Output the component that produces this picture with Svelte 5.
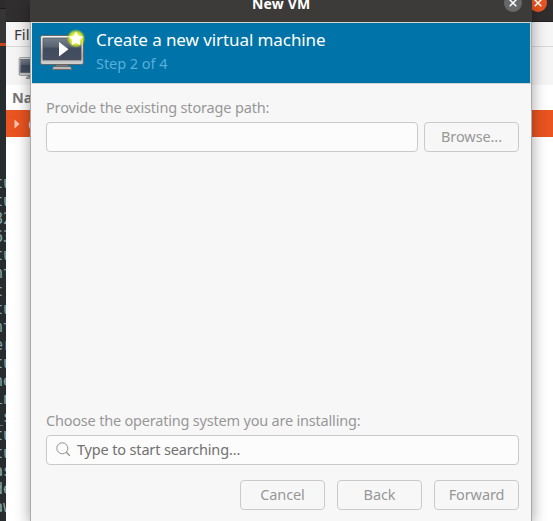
<script>
  const lines = ['tu', 'tu', '82', '63', 'tu', 'nt', 't ', 'tu', 'nt', 'er', 'tu', 'ne', 'in', '_s', 'tu', 'tu', 'as', 'de', 'aw'];
</script>

{#snippet monitor()}
  <svg class="monitor" width="48" height="44" viewBox="0 0 48 44" aria-hidden="true">
    <defs>
      <linearGradient id="frame" x2="0" y2="1"><stop offset="0" stop-color="#f3f3f3" /><stop offset=".72" stop-color="#aaa" /><stop offset="1" stop-color="#d5d5d5" /></linearGradient>
      <linearGradient id="screen" x2="0" y2="1"><stop offset="0" stop-color="#77808c" /><stop offset=".42" stop-color="#56606f" /><stop offset=".45" stop-color="#404b5e" /><stop offset="1" stop-color="#454f61" /></linearGradient>
      <radialGradient id="glow"><stop offset=".45" stop-color="#f2f45b" /><stop offset=".7" stop-color="#d5e51f" stop-opacity=".9" /><stop offset="1" stop-color="#b5d820" stop-opacity="0" /></radialGradient>
    </defs>
    <path d="M17 36h12v3h-12z" fill="#777" />
    <path d="M14.5 38.5h17l1.5 3h-20z" fill="#b9b9b9" stroke="#6b6b6b" />
    <rect x="1.5" y="7.5" width="43" height="29" rx="2" fill="url(#frame)" stroke="#666" />
    <rect x="4" y="10" width="38" height="22" fill="url(#screen)" stroke="#4a5260" stroke-width=".7" />
    <path d="M20 14l9.5 7.2L20 28.5z" fill="white" />
    <circle cx="37" cy="10.5" r="9.5" fill="url(#glow)" />
    <path d="M37 4.2l2 4.1 4.5.6-3.2 3.1.7 4.5-4-2.1-4 2.1.7-4.5-3.2-3.1 4.5-.6z" fill="white" stroke="white" stroke-width=".8" stroke-linejoin="round" />
  </svg>
{/snippet}

{#snippet cross()}
  <svg width="8" height="8" viewBox="0 0 8 8" aria-hidden="true"><path d="M.7.7l6.6 6.6M7.3.7L.7 7.3" stroke="white" stroke-width="1.5" /></svg>
{/snippet}

<div class="desktop">
  <div class="terminal">
    <div class="tabs"></div>
    <div class="lines">{#each lines as line}<div>{line}</div>{/each}</div>
  </div>
  <section class="manager">
    <div class="title"><span class="close">{@render cross()}</span></div>
    <div class="menu">File</div>
    <div class="tools"><div class="small">{@render monitor()}</div></div>
    <div class="heading">Name</div>
    <div class="row"><svg width="6" height="10" viewBox="0 0 6 10"><path d="M.5.5L5.5 5l-5 4.5z" fill="#f8c5b3" /></svg><span>QEMU/KVM</span></div>
  </section>
  <section class="dialog">
    <header class="bar"><b>New VM</b><span class="close">{@render cross()}</span></header>
    <div class="banner">
      {@render monitor()}
      <div class="words"><div class="big">Create a new virtual machine</div><div class="step">Step 2 of 4</div></div>
    </div>
    <main>
      <div class="label">Provide the existing storage path:</div>
      <div class="path"><div class="field"></div><button class="browse">Browse...</button></div>
      <div class="space"></div>
      <div class="label second">Choose the operating system you are installing:</div>
      <div class="field search">
        <svg width="15" height="15" viewBox="0 0 15 15" fill="none" stroke="#929292"><circle cx="6.3" cy="6.3" r="5.5" /><path d="M10.3 10.3l3.5 3.5" stroke-width="1.3" /></svg>
        <span>Type to start searching...</span>
      </div>
      <footer><button>Cancel</button><button>Back</button><button>Forward</button></footer>
    </main>
  </section>
</div>

<style>
  .desktop { position: relative; width: 553px; height: 521px; overflow: hidden; background: #272c2e; font: 14.5px/20px "Noto Sans", "Open Sans", sans-serif; color: #979797; white-space: nowrap; }
  .desktop * { box-sizing: border-box; }
  .terminal { width: 6px; height: 521px; overflow: hidden; }
  .tabs { height: 46px; border-bottom: 3px solid #c6431c; background: linear-gradient(#2d2b2c 8px, #1c1c1c 8px 9px, #353535 9px); }
  .lines { padding-top: 128px; margin-left: -6px; font: 15px/18px "DejaVu Sans Mono", monospace; color: #86a8ac; }
  .manager { position: absolute; left: 6px; top: 0; width: 547px; height: 521px; background: white; overflow: hidden; }
  .title { height: 22px; background: #312e2f; border-bottom: 1px solid #232122; padding-left: 523px; }
  .close { display: flex; align-items: center; justify-content: center; width: 18px; height: 18px; border-radius: 50%; margin-top: -6px; background: #66686a; flex: none; }
  .title .close { background: #e95420; transform: translateY(-6px); margin-top: 0; }
  .menu { height: 25px; padding: 2px 0 0 8px; background: #f6f6f6; border-bottom: 1px solid #d8d8d8; color: #3d3d3d; font-size: 15px; }
  .tools { height: 38px; background: #f5f5f5; padding: 6px 0 0 12px; }
  .small { width: 30px; height: 27px; }
  .small :global(svg) { width: 30px; height: 27px; }
  .heading { height: 25px; padding: 2px 0 0 6px; color: #777; font-weight: 700; }
  .row { height: 27px; background: #e95420; color: #fbd9cd; display: flex; align-items: center; gap: 8px; padding-left: 8px; }
  .dialog { position: absolute; left: 30px; top: 0; width: 502px; height: 521px; background: #f7f7f7; border: solid #aaa; border-width: 0 1px; box-shadow: 0 4px 14px rgba(0,0,0,.38); display: flex; flex-direction: column; }
  .bar { height: 22px; margin: 0 -1px; background: #3d3b39; display: flex; padding-left: 222px; color: white; flex: none; }
  .bar b { width: 250px; height: 20px; margin-top: -6px; font-size: 14px; letter-spacing: .15px; }
  .bar .close { margin-left: 2px; }
  .banner { height: 62px; background: #0073a9; border: 1px solid #d5d5d5; border-left-color: #eee; flex: none; display: flex; padding: 5px 0 0 7px; color: white; }
  .words { padding-left: 9px; }
  .big { font-size: 17px; line-height: 24px; letter-spacing: -.08px; }
  .step { color: #59afd9; margin-top: 1px; letter-spacing: -.05px; }
  main { flex: 1; padding: 13px 12px 11px 15px; display: flex; flex-direction: column; letter-spacing: -.16px; }
  .label { height: 20px; margin-bottom: 5px; }
  .second { letter-spacing: -.2px; }
  .path { display: flex; gap: 6px; }
  .field { height: 30px; flex: 1; border: 1px solid #cacaca; border-radius: 4px; background: #fcfcfc; }
  button { width: 85px; height: 30px; padding: 0 0 2px; border: 1px solid #cacaca; border-radius: 4px; background: #f7f7f7; color: #979797; font: inherit; letter-spacing: -.1px; }
  .browse { width: 95px; }
  .space { flex: 1; }
  .search { flex: none; display: flex; align-items: center; padding: 0 0 2px 9px; gap: 6px; color: #717171; }
  .search svg { margin-top: 1px; }
  footer { display: flex; justify-content: flex-end; gap: 12px; margin-top: 15px; }
</style>
